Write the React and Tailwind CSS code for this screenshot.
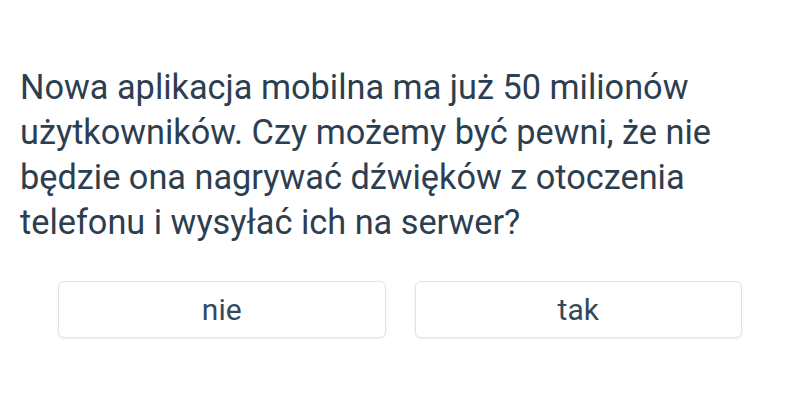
export default function App() {
    return (
        <div className="w-[800px] h-[400px] bg-white text-[#2c3e50]" style={{ fontFamily: 'Roboto, sans-serif' }}>
            <div className="pt-[65px] px-5">
                <p className="text-[34.3px] leading-[45px]">
                    Nowa aplikacja mobilna ma już 50 milionów użytkowników. Czy możemy być pewni, że nie będzie ona nagrywać dźwięków z otoczenia telefonu i wysyłać ich na serwer?
                </p>
            </div>

            <div className="mt-[36px] px-[58px] grid grid-cols-2 gap-[29px]">
                <button className="h-[57px] rounded-md border border-[#e3e3e3] bg-white shadow-[0_1px_2px_rgba(0,0,0,0.08)] text-[30px] text-[#34495e]">
                    nie
                </button>
                <button className="h-[57px] rounded-md border border-[#e3e3e3] bg-white shadow-[0_1px_2px_rgba(0,0,0,0.08)] text-[30px] text-[#34495e]">
                    tak
                </button>
            </div>
        </div>
    );
}
